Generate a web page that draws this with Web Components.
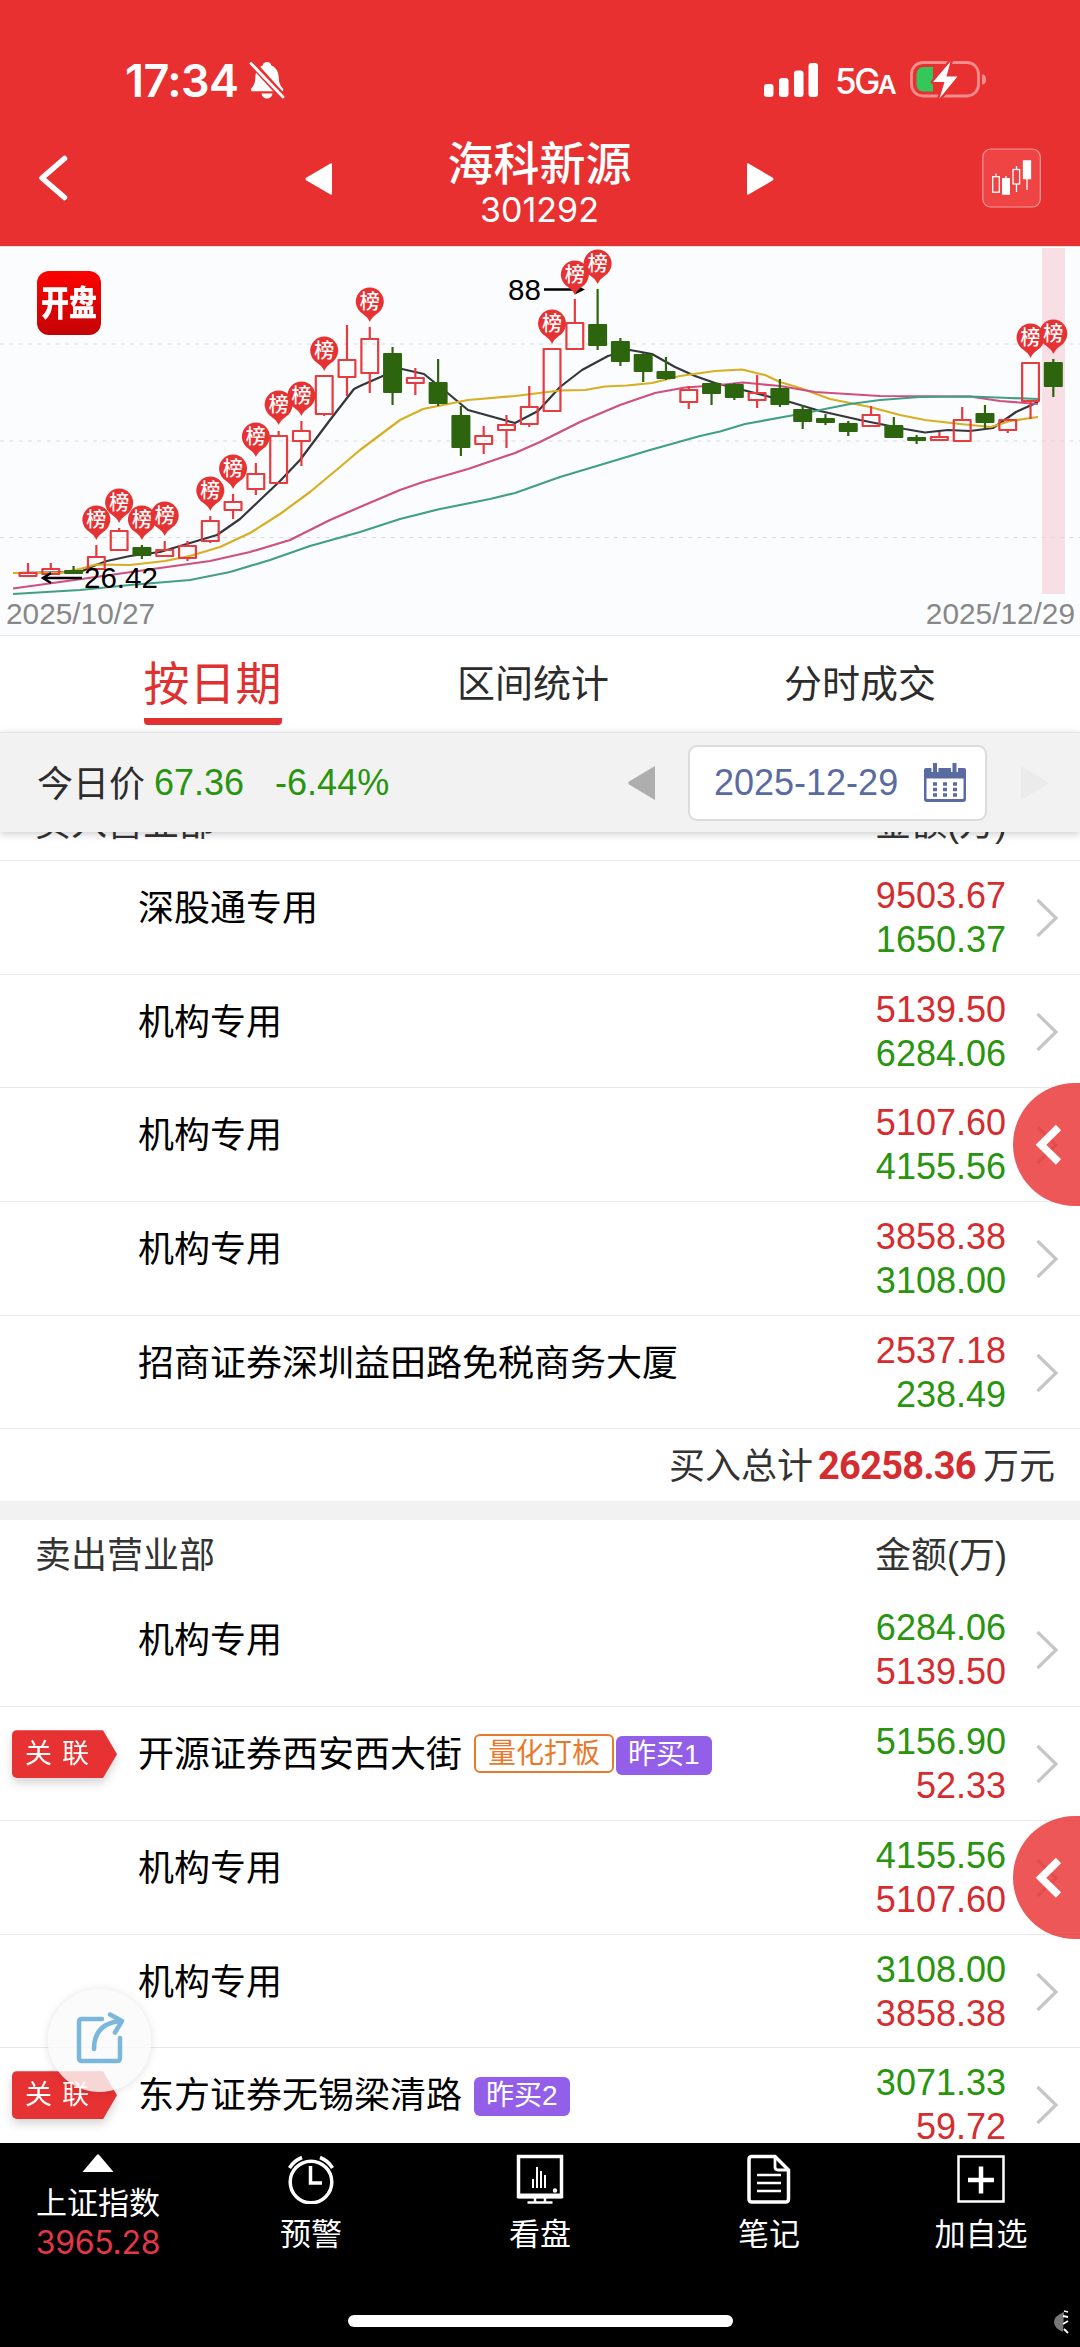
<!DOCTYPE html>
<html lang="zh-CN">
<head>
<meta charset="utf-8">
<title>海科新源 301292</title>
<style>
  body {
    margin: 0;
    width: 1080px;
    height: 2347px;
    overflow: hidden;
    background: #fff;
    font-family: "Liberation Sans", "Noto Sans CJK SC", sans-serif;
  }
</style>
</head>
<body>
<stock-page>
  <status-bar time="17:34" network="5G"></status-bar>
  <stock-header code="301292">海科新源</stock-header>
  <kline-chart from="2025/10/27" to="2025/12/29"></kline-chart>
  <tab-bar>
    <tab-item active>按日期</tab-item>
    <tab-item>区间统计</tab-item>
    <tab-item>分时成交</tab-item>
  </tab-bar>
  <price-bar price="67.36" change="-6.44%" date="2025-12-29">今日价</price-bar>
  <seat-list>
    <seat-head class="cut">买入营业部</seat-head>
    <seat-row up="9503.67" down="1650.37">深股通专用</seat-row>
    <seat-row up="5139.50" down="6284.06">机构专用</seat-row>
    <seat-row up="5107.60" down="4155.56" drawer>机构专用</seat-row>
    <seat-row up="3858.38" down="3108.00">机构专用</seat-row>
    <seat-row up="2537.18" down="238.49">招商证券深圳益田路免税商务大厦</seat-row>
    <seat-total amount="26258.36">买入总计</seat-total>
    <seat-head>卖出营业部</seat-head>
    <seat-row sell plain up="5139.50" down="6284.06">机构专用</seat-row>
    <seat-row sell linked up="52.33" down="5156.90">开源证券西安西大街
      <seat-tag slot="tags" kind="style">量化打板</seat-tag>
      <seat-tag slot="tags">昨买1</seat-tag>
    </seat-row>
    <seat-row sell up="5107.60" down="4155.56" drawer>机构专用</seat-row>
    <seat-row sell up="3858.38" down="3108.00">机构专用</seat-row>
    <seat-row sell linked up="59.72" down="3071.33">东方证券无锡梁清路
      <seat-tag slot="tags">昨买2</seat-tag>
    </seat-row>
    <share-button slot="float"></share-button>
  </seat-list>
  <bottom-bar></bottom-bar>
</stock-page>

<script>
// attach an open shadow root holding the given markup
const render = (el, html) => {
  const template = document.createElement("template");
  template.innerHTML = html;
  el.attachShadow({ mode: "open" }).appendChild(template.content.cloneNode(true));
};

class StockPage extends HTMLElement {
  constructor() {
    super();
    render(this, `
      <style>
        :host { display: flex; flex-direction: column; width: 1080px; height: 2347px; overflow: hidden; }
      </style>
      <slot></slot>
    `);
  }
}

class StatusBar extends HTMLElement {
  constructor() {
    super();
    render(this, `
      <style>
        :host {
          display: flex;
          align-items: center;
          box-sizing: border-box;
          flex: none;
          height: 130px;
          padding: 30px 94px 0 125px;
          background: #e93030;
          color: #fff;
          font-family: Inter, sans-serif;
          font-weight: 600;
        }
        .time { font-size: 45px; letter-spacing: -0.6px; width: 122px; white-space: nowrap; }
        .right { display: flex; align-items: center; margin-left: auto; }
        .net { font-size: 35px; font-weight: 500; letter-spacing: -2.500px; margin: 2px 13px 0 17px; width: 62px; white-space: nowrap; }
        .net small { font-size: 26px; font-weight: 600; }
        svg { display: block; }
      </style>
      <span class="time">${this.getAttribute("time")}</span>
      <svg width="40" height="40" viewBox="0 0 40 40">
        <path d="M20 2c2.500 0 4 1.500 4.300 3.400 5 2 7.200 6.300 7.400 11.600.2 6 1.500 8.500 4 11.300.8 1 1 3-1 3H5.600c-2 0-2-2-1.200-3C7 25.500 8.200 23 8.400 17c.2-5.300 2.400-9.600 7.300-11.600C16 3.500 17.500 2 20 2z" fill="#fff"/>
        <path d="M14.500 33.500h11c-.5 3.500-2.800 5-5.500 5s-5-1.500-5.500-5z" fill="#fff"/>
        <path d="M5 3l31 34" stroke="#e93030" stroke-width="7"/>
        <path d="M4 3.500l32 33.500" stroke="#fff" stroke-width="2.800" stroke-linecap="round"/>
      </svg>
      <div class="right">
        <svg width="54" height="36" viewBox="0 0 54 36" fill="#fff">
          <rect x="0" y="22" width="9.500" height="13" rx="3"/>
          <rect x="15" y="16" width="9.500" height="19" rx="3"/>
          <rect x="30" y="8.500" width="9.500" height="26.500" rx="3"/>
          <rect x="44.500" y="1" width="9.500" height="34" rx="3"/>
        </svg>
        <span class="net">${this.getAttribute("network")}<small>A</small></span>
        <svg width="76" height="40" viewBox="0 0 76 40">
          <rect x="1.500" y="2.500" width="67" height="33.500" rx="11.500" fill="none" stroke="#f58d8d" stroke-width="2.800"/>
          <path d="M72 14.500c3 0 4 2 4 5s-1 5-4 5z" fill="#f58d8d"/>
          <path d="M14.500 7H23v24.500h-8.500C9 31.500 6.500 29 6.500 23.500v-8C6.500 10 9 7 14.500 7z" fill="#34c759"/>
          <path d="M40.500 1.500L23 22h11.500L29.500 38.500l18-22H36.500z" fill="#fff" stroke="#e93030" stroke-width="4.500" stroke-linejoin="round" paint-order="stroke"/>
        </svg>
      </div>
    `);
  }
}

class StockHeader extends HTMLElement {
  constructor() {
    super();
    render(this, `
      <style>
        :host {
          display: grid;
          grid-template-columns: 305px 27px 1fr 27px 208px 59px 39px;
          align-items: start;
          flex: none;
          height: 116px;
          background: #e93030;
          color: #fff;
        }
        svg { display: block; }
        .back { margin: 22px 0 0 36px; }
        .step { margin-top: 32px; }
        .title { display: flex; flex-direction: column; text-align: center; padding-top: 2px; }
        .name { font: 500 46px/56px "Noto Sans CJK SC", sans-serif; }
        .code { font: 400 34px/36px Inter, sans-serif; margin-top: 4px; }
        .kline { margin-top: 18px; }
      </style>
      <svg class="back" width="34" height="50" viewBox="0 0 34 50">
        <path d="M28.500 6.500L6 26l22.500 19.500" fill="none" stroke="#fff" stroke-width="5.500" stroke-linecap="round" stroke-linejoin="round"/>
      </svg>
      <svg class="step" width="27" height="34" viewBox="0 0 27 34"><path d="M27 2.500q0-1.800-1.500-1L1.500 15.500q-2 1.500 0 3l24 14q1.500.8 1.500-1z" fill="#fff"/></svg>
      <div class="title">
        <div class="name"><slot></slot></div>
        <div class="code">${this.getAttribute("code")}</div>
      </div>
      <svg class="step" width="27" height="34" viewBox="0 0 27 34"><path d="M0 2.500q0-1.800 1.500-1l24 14q2 1.500 0 3l-24 14q-1.500.8-1.500-1z" fill="#fff"/></svg>
      <span></span>
      <svg class="kline" width="59" height="60" viewBox="0 0 59 60">
        <rect x=".8" y="1" width="57.500" height="58" rx="8" fill="#ee4444" stroke="#f39a9a" stroke-width="1.200"/>
        <g fill="none" stroke="#fff" stroke-width="1.300">
          <path d="M14 25.500v3M24 28v3M34.500 18v3M34.500 36v8M45 31v11"/>
          <rect x="10.700" y="28.700" width="6.600" height="15.500"/>
          <rect x="31" y="21.500" width="6.600" height="14.500"/>
          <path d="M20.700 30.700h6.600v15.500h-6.600zM41.500 13h7v17.500h-7z" fill="#fff"/>
        </g>
      </svg>
      <span></span>
    `);
  }
}

// [color, high, body top, body bottom, low]
const candles = [
  ["r", 563, 573, 576, 577], ["r", 563, 569, 574, 575], ["g", 566, 571, 573, 574], ["r", 545, 557, 569, 571],
  ["r", 528, 531, 550, 550], ["g", 545, 548, 555, 559], ["r", 541, 550, 556, 556], ["r", 541, 546, 558, 561],
  ["r", 516, 521, 541, 543], ["r", 494, 502, 510, 519], ["r", 463, 474, 489, 495], ["r", 431, 436, 483, 483],
  ["r", 421, 431, 441, 466], ["r", 376, 376, 414, 416], ["r", 325, 360, 377, 396], ["r", 327, 339, 373, 393],
  ["g", 347, 354, 392, 405], ["r", 368, 378, 383, 395], ["g", 359, 383, 403, 406], ["g", 406, 416, 447, 456],
  ["r", 426, 436, 444, 454], ["r", 415, 425, 430, 448], ["r", 386, 407, 424, 427], ["r", 349, 349, 411, 412],
  ["r", 299, 323, 349, 349], ["g", 289, 325, 345, 350], ["g", 338, 342, 361, 366], ["g", 353, 355, 371, 382],
  ["g", 357, 372, 378, 380], ["r", 386, 390, 402, 409], ["g", 382, 384, 393, 405], ["g", 383, 385, 397, 400],
  ["r", 375, 393, 400, 408], ["g", 379, 389, 404, 407], ["g", 405, 410, 421, 429], ["g", 414, 419, 422, 425],
  ["g", 421, 424, 431, 436], ["r", 406, 415, 426, 426], ["g", 417, 426, 437, 437], ["g", 435, 438, 440, 444],
  ["r", 432, 437, 440, 440], ["r", 407, 420, 441, 441], ["g", 405, 414, 422, 428], ["r", 418, 420, 430, 433],
  ["r", 363, 363, 401, 419], ["g", 359, 363, 386, 397],
];

// candle index: tip y
const pins = {
  3: 540, 4: 523, 5: 540, 6: 536, 8: 511, 9: 489, 10: 457, 11: 425, 12: 416,
  13: 371, 15: 322, 23: 344, 24: 295, 25: 284, 44: 358, 45: 354,
};

const averages = [
  ["#35353c", "13,573 80,572 96,565 107,561 130,556 160,552 190,543 217,535 240,519 260,500 280,481 300,460 330,420 354,389 360,386 385,375 402,369 424,374 450,395 468,410 515,423 538,411 560,387 582,370 608,356 630,350 652,354 675,367 695,376 715,383 743,390 790,402 820,411 860,420 905,429 925,432.500 948,430 970,431 993,428 1016,412 1038,402"],
  ["#d8ae22", "13,573 60,573 80,569 96,564.500 130,565 165,561 190,556 220,547 250,533 280,514 310,492 340,467 360,450 400,420 423,409 468,400 515,396 560,390.500 585,390 605,386.500 627,385.500 652,383 680,376 715,371 742,369.500 765,375 780,382 800,388 830,399 870,407 900,415 925,420 960,424 991,427 1010,421 1038,417"],
  ["#d04f80", "13,588.500 60,582 110,575 160,568 210,561 250,552 290,540 330,520 360,507 400,490 423,482 468,469 515,453 540,442 580,422 620,405 655,393 685,387.500 720,385 743,382.500 780,386 815,392 880,396 970,396.500 1000,401 1038,404"],
  ["#41a084", "13,594 80,590 130,585 190,580 230,572 270,560 310,546 360,532 400,519 440,509 490,499 515,493 560,477 600,465 650,450 700,436 720,431.500 745,424 800,414 850,404 880,400 920,397 970,396.500 1010,398 1038,399"],
];

const candleX = (i) => 28 + 22.785 * i;

class KlineChart extends HTMLElement {
  constructor() {
    super();
    const lines = averages
      .map(([color, points]) => `<polyline points="${points}" fill="none" stroke="${color}" stroke-width="2.200" stroke-linejoin="round"/>`)
      .join("");
    const bars = candles.map(([type, high, top, bottom, low], i) => {
      const x = candleX(i);
      const color = type === "r" ? "#e63b3f" : "#2d650f";
      const fill = type === "r" ? "none" : color;
      return `<g stroke="${color}" stroke-width="2.200" stroke-linejoin="round">
        <path d="M${x} ${high}V${top}M${x} ${bottom}V${low}"/>
        <rect x="${x - 8.4}" y="${top}" width="16.800" height="${bottom - top}" fill="${fill}"/>
      </g>`;
    }).join("");
    const marks = Object.entries(pins).map(([i, y]) => `
      <g transform="translate(${candleX(i)} ${y})">
        <path d="M0 0C-1.500-4-4-6-7.500-8.600A14 14 0 1 1 7.500-8.600C4-6 1.500-4 0 0z" fill="#e63233"/>
        <text x="0" y="-13.500" text-anchor="middle" font-size="20" font-weight="500" fill="#fff">榜</text>
      </g>`).join("");

    render(this, `
      <style>
        :host {
          display: flex;
          flex-direction: column;
          position: relative;
          box-sizing: border-box;
          flex: none;
          height: 390px;
          background: #fbfcfe;
          border-bottom: 1.500px solid #e6e8ea;
        }
        svg { display: block; flex: none; font-family: "Noto Sans CJK SC", sans-serif; }
        .logo {
          position: absolute;
          left: 37px;
          top: 25px;
          width: 64px;
          height: 64px;
          border-radius: 12px;
          background: linear-gradient(#fb0300, #c40406);
          color: #fff;
          font: 900 28px/60px "Noto Sans CJK SC", sans-serif;
          text-align: center;
        }
        .logo span { display: block; transform: scaleY(1.25); }
        .dates { display: flex; justify-content: space-between; padding: 0 5px 0 6px; font-size: 29.800px; line-height: 34px; color: #888; }
        .num { font-family: "Liberation Sans", sans-serif; font-size: 29.500px; }
      </style>
      <svg width="1080" height="351" viewBox="0 246 1080 351">
        <rect x="0" y="246" width="1080" height="1" fill="#f7dede"/>
        <rect x="1042" y="248" width="23" height="346" fill="#f7dfe5"/>
        <path d="M0 344h1080M0 441h1080M0 537.500h1080" stroke="#d8dade" stroke-width="1.200" stroke-dasharray="4 5.300"/>
        ${lines}
        ${bars}
        <path d="M82 578H44M51 573L43 578L51 583" fill="none" stroke="#000" stroke-width="2.500"/>
        <text class="num" x="84" y="588">26.42</text>
        <path d="M544 289.500H580" stroke="#000" stroke-width="2.500"/>
        <path d="M575 284.500L585 289.500L575 294.500L577 289.500z"/>
        <text class="num" x="508" y="299.500">88</text>
        ${marks}
      </svg>
      <div class="dates"><span>${this.getAttribute("from")}</span><span>${this.getAttribute("to")}</span></div>
      <div class="logo"><span>开盘</span></div>
    `);
  }
}

class TabBar extends HTMLElement {
  constructor() {
    super();
    render(this, `
      <style>
        :host { display: grid; grid-template-columns: 425px 216px 438px; flex: none; box-sizing: border-box; height: 96px; background: #fff; }
      </style>
      <slot></slot>
    `);
  }
}

class TabItem extends HTMLElement {
  constructor() {
    super();
    render(this, `
      <style>
        :host { display: flex; justify-content: center; color: #2c2c2c; font-size: 38px; white-space: nowrap; }
        :host([active]) { color: #e03030; font-size: 46px; }
        span { box-sizing: border-box; height: 89px; line-height: 96px; }
        :host([active]) span { border-bottom: 7px solid #e03030; border-radius: 0 0 4px 4px; }
      </style>
      <span><slot></slot></span>
    `);
  }
}

class PriceBar extends HTMLElement {
  constructor() {
    super();
    render(this, `
      <style>
        :host {
          display: flex;
          align-items: center;
          box-sizing: border-box;
          flex: none;
          height: 100px;
          padding: 1px 32px 0 37px;
          background: #f2f2f2;
          border-top: 1px solid #e4e4e4;
          box-shadow: 0 2px 8px rgba(0, 0, 0, .2);
          font-size: 36px;
          color: #2c2c2c;
          position: relative;
          z-index: 1;
        }
        .label { margin-bottom: 5px; }
        .value { color: #28940f; margin-left: 9px; }
        .change { margin-left: 31px; }
        svg { display: block; flex: none; }
        .prev { margin-left: auto; }
        .date {
          display: flex;
          align-items: center;
          justify-content: space-between;
          box-sizing: border-box;
          width: 299px;
          height: 76px;
          margin: 0 34px 0 33px;
          padding: 0 18px 0 24px;
          border: 2px solid #dcdcdc;
          border-radius: 9px;
          background: #fff;
          color: #5a6ba2;
        }
      </style>
      <span class="label"><slot></slot></span>
      <span class="value">${this.getAttribute("price")}</span>
      <span class="value change">${this.getAttribute("change")}</span>
      <svg class="prev" width="27" height="34" viewBox="0 0 27 34"><path d="M27 0v34L1 18.500q-1.500-1.500 0-3z" fill="#aeaeae"/></svg>
      <div class="date">
        ${this.getAttribute("date")}
        <svg width="44" height="42" viewBox="0 0 44 42">
          <path d="M3 6h38q2 0 2 2v29q0 3-3 3H4q-3 0-3-3V8q0-2 2-2z" fill="#5a6ba2"/>
          <path d="M3.500 16.500h37V36q0 1-1 1h-35q-1 0-1-1z" fill="#fff"/>
          <path d="M12 1v9M31.500 1v9" stroke="#fff" stroke-width="7"/>
          <path d="M12 1v9M31.500 1v9" stroke="#5a6ba2" stroke-width="4"/>
          <path d="M10 22h4M20 22h4M30 22h4M10 27.500h4M20 27.500h4M30 27.500h4M10 33h4M20 33h4M30 33h4" stroke="#5a6ba2" stroke-width="3.500"/>
        </svg>
      </div>
      <svg width="27" height="34" viewBox="0 0 27 34"><path d="M0 0v34l26-15.500q1.500-1.500 0-3z" fill="#ebebeb"/></svg>
    `);
  }
}

class SeatList extends HTMLElement {
  constructor() {
    super();
    render(this, `
      <style>
        :host { display: block; position: relative; flex: none; height: 1311px; overflow: hidden; background: #fff; }
        ::slotted(seat-head.cut) { margin-top: -44px; }
      </style>
      <slot></slot>
      <slot name="float"></slot>
    `);
  }
}

class SeatHead extends HTMLElement {
  constructor() {
    super();
    render(this, `
      <style>
        :host {
          display: flex;
          justify-content: space-between;
          height: 72px;
          padding: 0 73px 0 35px;
          font-size: 36px;
          line-height: 72px;
          color: #333;
        }
      </style>
      <span><slot></slot></span><span>金额(万)</span>
    `);
  }
}

class SeatRow extends HTMLElement {
  constructor() {
    super();
    const up = `<span class="up">${this.getAttribute("up")}</span>`;
    const down = `<span class="down">${this.getAttribute("down")}</span>`;
    render(this, `
      <style>
        :host {
          display: grid;
          grid-template-columns: 138px 1fr auto 74px;
          position: relative;
          box-sizing: border-box;
          height: 113.700px;
          border-top: 1.500px solid #e9e9e9;
          font-size: 36px;
          color: #000;
        }
        :host([plain]) { border-top-color: transparent; }
        .link {
          display: none;
          width: 105px;
          height: 48px;
          margin: 23px 0 0 12px;
          filter: drop-shadow(0 5px 5px rgba(0, 0, 0, .16));
        }
        :host([linked]) .link { display: block; }
        .flag {
          box-sizing: border-box;
          height: 48px;
          padding-left: 13px;
          background: #e73233;
          color: #fff;
          font-size: 27px;
          line-height: 48px;
          letter-spacing: 10px;
          white-space: nowrap;
          border-radius: 5px 0 0 5px;
          clip-path: polygon(0 0, 91px 0, 100% 50%, 91px 100%, 0 100%);
        }
        .main { display: flex; align-items: flex-start; gap: 2px; line-height: 52px; padding-top: 22px; }
        .name { white-space: nowrap; margin-right: 10px; }
        .nums { display: flex; flex-direction: column; text-align: right; line-height: 44px; padding-top: 13px; }
        .up { color: #d42c2f; }
        .down { color: #28940f; }
        .arrow { display: block; margin: 37px 0 0 29px; }
        .drawer {
          display: none;
          position: absolute;
          right: 0;
          top: -5px;
          width: 67px;
          height: 123px;
          border-radius: 62px 0 0 62px;
          background: rgba(233, 48, 48, .81);
        }
        :host([drawer]) .drawer { display: block; }
        :host([drawer]) { z-index: 1; }
      </style>
      <div><div class="link"><div class="flag">关联</div></div></div>
      <div class="main"><span class="name"><slot></slot></span><slot name="tags"></slot></div>
      <div class="nums">${this.hasAttribute("sell") ? down + up : up + down}</div>
      <svg class="arrow" width="24" height="40" viewBox="0 0 24 40">
        <path d="M2.500 2L21 20L2.500 38" fill="none" stroke="#c6c6c6" stroke-width="3.200"/>
      </svg>
      <div class="drawer">
        <svg width="67" height="123" viewBox="0 0 67 123"><path d="M45.500 44.500L28 61.800L45.500 79" fill="none" stroke="#fff" stroke-width="7.500"/></svg>
      </div>
    `);
  }
}

class SeatTag extends HTMLElement {
  constructor() {
    super();
    render(this, `
      <style>
        :host {
          display: block;
          box-sizing: border-box;
          height: 39px;
          margin-top: 7px;
          padding: 0 12px;
          border-radius: 6px;
          background: #945fe8;
          color: #fff;
          font-size: 28px;
          line-height: 38px;
          white-space: nowrap;
        }
        :host([kind="style"]) {
          margin-top: 5px;
          border: 2.500px solid #e8792b;
          background: #fff;
          color: #e8792b;
          line-height: 35px;
        }
      </style>
      <slot></slot>
    `);
  }
}

class SeatTotal extends HTMLElement {
  constructor() {
    super();
    render(this, `
      <style>
        :host {
          display: flex;
          justify-content: flex-end;
          box-sizing: border-box;
          height: 92px;
          padding-right: 25px;
          border-top: 1.500px solid #e9e9e9;
          border-bottom: 19px solid #f2f2f2;
          font-size: 36px;
          line-height: 75px;
          color: #333;
        }
        b { font-family: Roboto, sans-serif; font-size: 38px; letter-spacing: -.7px; color: #d42c2f; margin: 0 7px 0 5px; }
      </style>
      <slot></slot><b>${this.getAttribute("amount")}</b>万元
    `);
  }
}

class ShareButton extends HTMLElement {
  constructor() {
    super();
    render(this, `
      <style>
        :host {
          display: block;
          position: absolute;
          left: 48px;
          top: 1157px;
          width: 103px;
          height: 103px;
          border-radius: 50%;
          background: rgba(250, 250, 250, .82);
          box-shadow: 0 1px 10px rgba(0, 0, 0, .12);
          z-index: 2;
        }
      </style>
      <svg width="103" height="103" viewBox="0 0 103 103" fill="none" stroke="#7ab7da" stroke-width="4.500" stroke-linecap="round" stroke-linejoin="round">
        <path d="M54 30H34q-3 0-3 3v36q0 3 3 3h35q3 0 3-3V49"/>
        <path d="M46 60C46 44 54 34 72 32M62 25.500l12 6.500-7 11.500"/>
      </svg>
    `);
  }
}

class BottomBar extends HTMLElement {
  constructor() {
    super();
    render(this, `
      <style>
        :host {
          display: flex;
          flex-direction: column;
          justify-content: space-between;
          align-items: center;
          box-sizing: border-box;
          flex: 1;
          padding: 11px 0 20px;
          background: #000;
          color: #fff;
          position: relative;
        }
        .items { display: grid; grid-template-columns: 196px 230px 228px 230px 194px; width: 1078px; align-self: flex-start; font-size: 31px; }
        .item { display: flex; flex-direction: column; align-items: center; line-height: 40px; }
        svg { display: block; }
        .item svg { fill: none; stroke: #fff; stroke-width: 3.500; }
        .item svg + span { margin-top: 11px; }
        .item svg.up { fill: #fff; stroke: none; }
        .item svg.up + span { margin-top: 12px; }
        .index { font: 32px/38px Inter, sans-serif; letter-spacing: -.3px; color: #e03848; }
        .home { width: 385px; height: 12px; border-radius: 6px; background: #fff; }
        .mark { position: absolute; right: 11px; bottom: 12px; }
      </style>
      <div class="items">
        <div class="item">
          <svg class="up" width="32" height="18" viewBox="0 0 32 18"><path d="M15 .8q1-.9 2 0L31.500 18H.5z"/></svg>
          <span>上证指数</span>
          <span class="index">3965.28</span>
        </div>
        <div class="item">
          <svg width="48" height="50" viewBox="0 0 48 50">
            <circle cx="24" cy="28" r="20.800"/>
            <path d="M23.500 12v17H35M2.500 14Q7 6.500 15 3.500M45.500 14Q41 6.500 33 3.500"/>
          </svg>
          <span>预警</span>
        </div>
        <div class="item">
          <svg width="48" height="50" viewBox="0 0 48 50">
            <path d="M2.500 2.500h43v40h-43z"/>
            <path d="M2 42h44" stroke-width="5"/>
            <path d="M19 44v5M29 44v5M11.500 48.500h25" stroke-width="2.500"/>
            <path d="M17 25v9M21 13v21M25 17v17M29 21v13" stroke-width="2"/>
            <circle cx="39" cy="36.500" r="1.200" stroke-width="2"/>
          </svg>
          <span>看盘</span>
        </div>
        <div class="item">
          <svg width="44" height="50" viewBox="0 0 44 50">
            <path d="M5 2.500h23L41.500 16v29q0 3-3 3H5q-3 0-3-3V5.500q0-3 3-3z"/>
            <path d="M28 4v9q0 3 3 3h9" stroke-width="2.800"/>
            <path d="M10 21h24M10 29h24M10 37h24" stroke-width="2.500"/>
          </svg>
          <span>笔记</span>
        </div>
        <div class="item">
          <svg width="48" height="50" viewBox="0 0 48 50">
            <path d="M1.500 2.500h45v45h-45z" stroke-width="2.500"/>
            <path d="M24 12.500v27M11 26h26" stroke-width="4.500"/>
          </svg>
          <span>加自选</span>
        </div>
      </div>
      <div class="home"></div>
      <svg class="mark" width="16" height="26" viewBox="0 0 16 26">
        <path d="M11 3Q1 7 1 13t9 10z" fill="#777"/>
        <path d="M11 2l4 1M10 7l5 1M15 12l-5 3M11 20l4 4" stroke="#fff" stroke-width="1.800"/>
      </svg>
    `);
  }
}

customElements.define("stock-page", StockPage);
customElements.define("status-bar", StatusBar);
customElements.define("stock-header", StockHeader);
customElements.define("kline-chart", KlineChart);
customElements.define("tab-bar", TabBar);
customElements.define("tab-item", TabItem);
customElements.define("price-bar", PriceBar);
customElements.define("seat-list", SeatList);
customElements.define("seat-head", SeatHead);
customElements.define("seat-row", SeatRow);
customElements.define("seat-tag", SeatTag);
customElements.define("seat-total", SeatTotal);
customElements.define("share-button", ShareButton);
customElements.define("bottom-bar", BottomBar);
</script>
</body>
</html>
